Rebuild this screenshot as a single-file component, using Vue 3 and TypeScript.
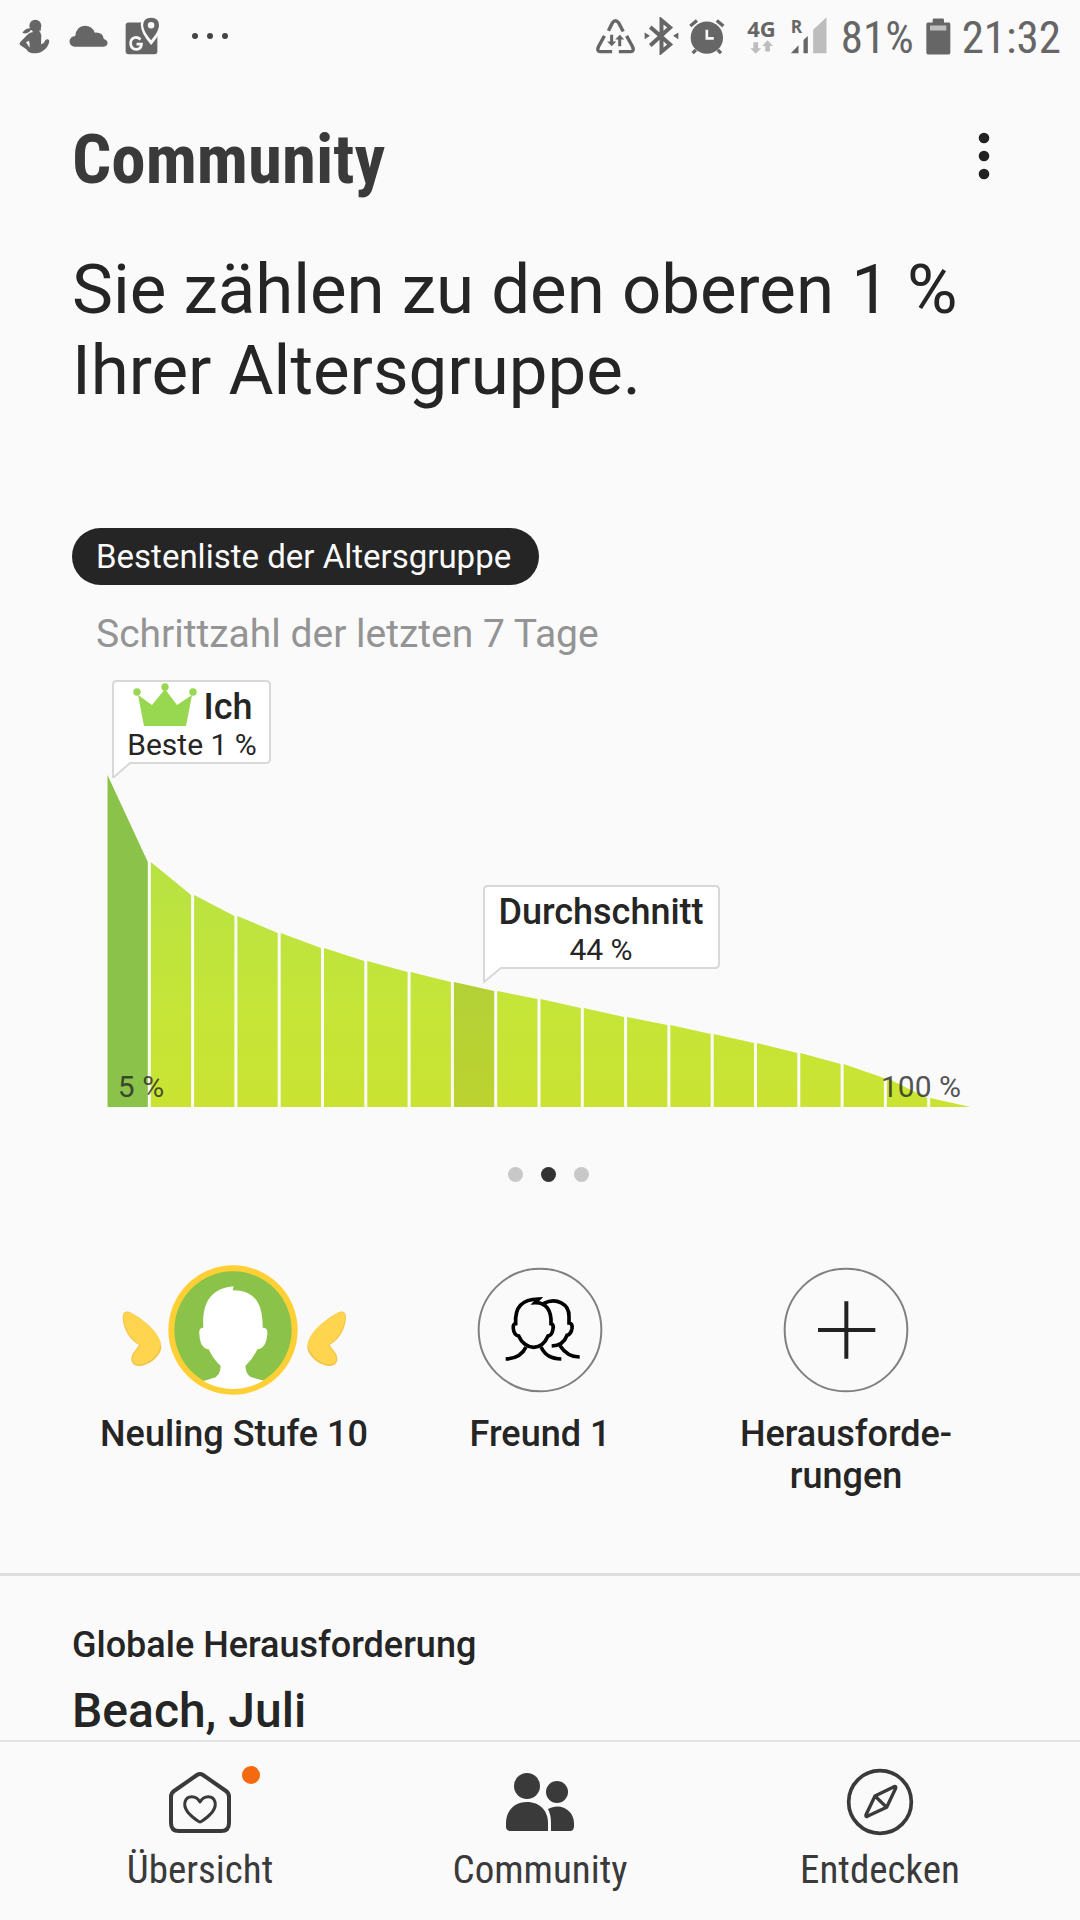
<script setup lang="ts">
interface Bar {
  points: string
  fill: string
}

const chartLeft = 34
const chartBase = 432
const barStep = 43.3
const heights: number[] = [
  332, 245, 212, 191, 174, 159, 146, 135, 125, 116, 108, 99, 90, 82, 73, 64, 54, 43, 29, 9, 0,
]
const meIndex = 0
const averageIndex = 8

function barFill(index: number): string {
  if (index === meIndex) return '#8bc34a'
  if (index === averageIndex) return 'url(#averageFill)'
  return 'url(#barFill)'
}

const bars: Bar[] = heights.slice(0, -1).map((height, i) => {
  const left = chartLeft + i * barStep + 1.5
  const right = chartLeft + (i + 1) * barStep - 1.5
  return {
    points: `${left},${chartBase} ${left},${chartBase - height} ${right},${chartBase - heights[i + 1]} ${right},${chartBase}`,
    fill: barFill(i),
  }
})

const slides: boolean[] = [false, true, false]
</script>

<template>
  <div class="page">
    <div class="status">
      <div class="status-left">
        <svg class="s-person" viewBox="57 56 93 105" width="31" height="35">
          <circle cx="106" cy="76" r="18" />
          <path d="M113 90L122 92L123 80Z" />
          <path d="M94 84Q78 82 67 97Q80 103 90 93Q90 88 96 88Z" />
          <path
            fill-rule="evenodd"
            d="M98 90L116 90Q122 96 124 104L123 132Q134 128 137 118Q144 114 148 121Q146 140 128 152Q118 160 98 159Q84 157 79 147L60 134Q57 130 61 125L82 103Q90 96 98 96ZM78 126L89 142Q90 132 87 121Z"
          />
        </svg>
        <svg class="s-cloud" viewBox="206 70 116 66" width="39" height="22">
          <path
            d="M222 135Q207 133 207 119Q208 105 224 103Q228 73 253 72Q275 72 283 93Q306 91 310 112Q322 115 321 126Q319 134 308 135Z"
          />
        </svg>
        <svg class="s-maps" viewBox="377 43 104 115" width="35" height="38">
          <rect x="378" y="60" width="96" height="96" rx="9" />
          <path class="cut" d="M455 128Q424 92 424 68Q424 34 455 34Q486 34 486 68Q486 92 455 128Z" />
          <path
            fill-rule="evenodd"
            d="M455 113Q431 86 431 68Q431 45 455 45Q479 45 479 68Q479 86 455 113ZM455 58A10 10 0 1 0 455 78A10 10 0 1 0 455 58Z"
          />
          <path class="cut-line" d="M423 111Q416 104 406 105Q392 109 393 124Q395 141 410 141Q425 140 426 125H411" />
        </svg>
        <svg class="s-dots" viewBox="0 0 38 8" width="38" height="8">
          <circle cx="4" cy="4" r="3" />
          <circle cx="19" cy="4" r="3" />
          <circle cx="34" cy="4" r="3" />
        </svg>
      </div>
      <div class="status-right">
        <svg class="s-recycle" viewBox="50 54 116 107" width="39" height="36">
          <g class="line" stroke-width="10">
            <path d="M87 92L99 68Q108 56 117 68L131 94" />
            <path d="M75 107L58 138Q51 153 62 154H98" />
            <path d="M141 107L158 138Q165 153 154 154H118" />
          </g>
          <path d="M92 104h9v20h9l-13 14l-14 -14h9ZM116 138h9v-20h9l-13 -14l-14 14h9Z" />
        </svg>
        <svg class="s-bluetooth" viewBox="198 50 104 115" width="35" height="38">
          <path class="line" stroke-width="12" d="M216 80L276 133L250 155V60L276 82L216 136" />
          <path d="M199 97L215 107L199 117ZM301 97L285 107L301 117Z" />
        </svg>
        <svg class="s-alarm" viewBox="333 52 109 111" width="36" height="37">
          <circle cx="387" cy="111" r="49" />
          <path class="line" stroke-width="10" d="M337 76L357 59M437 76L417 59M354 148L344 158M420 148L430 158" />
          <path class="cut-line" stroke-width="8" d="M387 87V113H408" />
        </svg>
        <div class="network">
          <span class="network-type">4G</span>
          <svg viewBox="516 119 68 40" width="23" height="14">
            <path
              class="pale"
              d="M526 125h14v18h9l-16 16l-16 -16h9ZM561 152h14v-16h9l-16 -17l-16 17h9Z"
            />
          </svg>
        </div>
        <svg class="s-signal" viewBox="635 26 110 162" width="37" height="54">
          <text x="637" y="97" class="roaming">R</text>
          <path d="M637 159L660 135V159ZM675 159V119L688 107V159Z" />
          <path class="pale" d="M704 159V88L744 51V159Z" />
        </svg>
        <span class="status-text">81%</span>
        <svg class="s-battery" viewBox="1037 53 75 110" width="25" height="37">
          <path d="M1057 66V58Q1057 54 1061 54H1087Q1091 54 1091 58V66H1106Q1110 66 1110 71V157Q1110 162 1105 162H1043Q1038 162 1038 157V71Q1038 66 1043 66Z" />
          <rect class="pale" x="1049" y="75" width="49" height="15" />
        </svg>
        <span class="status-text clock">21:32</span>
      </div>
    </div>

    <header class="header">
      <h1>Community</h1>
      <button class="more" type="button" aria-label="Weitere Optionen">
        <svg viewBox="0 0 12 48" width="12" height="48">
          <circle cx="6" cy="6" r="5.3" />
          <circle cx="6" cy="24" r="5.3" />
          <circle cx="6" cy="42" r="5.3" />
        </svg>
      </button>
    </header>

    <main>
      <section class="ranking">
        <p class="headline">Sie zählen zu den oberen 1&nbsp;% Ihrer Altersgruppe.</p>
        <h2 class="pill">Bestenliste der Altersgruppe</h2>
        <p class="period">Schrittzahl der letzten 7 Tage</p>

        <svg class="chart" viewBox="0 0 936 435" role="img" aria-label="Schrittzahl der Altersgruppe">
          <defs>
            <linearGradient id="barFill" gradientUnits="userSpaceOnUse" x1="0" y1="180" x2="0" y2="432">
              <stop offset="0" stop-color="#b7e243" />
              <stop offset="0.6" stop-color="#c5e538" />
              <stop offset="1" stop-color="#cae332" />
            </linearGradient>
            <linearGradient id="averageFill" gradientUnits="userSpaceOnUse" x1="0" y1="305" x2="0" y2="432">
              <stop offset="0" stop-color="#b3d137" />
              <stop offset="1" stop-color="#bcd32f" />
            </linearGradient>
          </defs>
          <polygon v-for="(bar, i) in bars" :key="i" :points="bar.points" :fill="bar.fill" />
          <text class="axis" x="69" y="422">5 %</text>
          <text class="axis" x="849" y="422">100 %</text>

          <path
            class="bubble"
            d="M41 10Q41 6 45 6H194Q198 6 198 10V84Q198 88 194 88H58L42 102H41Z"
          />
          <g class="crown">
            <circle cx="65" cy="17" r="3.7" />
            <circle cx="93" cy="12" r="3.7" />
            <circle cx="121" cy="17" r="3.7" />
            <path d="M66 20L80 30L93 14L105 30L120 20L114 51H72Z" />
          </g>
          <text class="bubble-title" x="156" y="44">Ich</text>
          <text class="bubble-text" x="120" y="80">Beste 1 %</text>

          <path
            class="bubble"
            d="M412 215Q412 211 416 211H643Q647 211 647 215V289Q647 293 643 293H429L412 307Z"
          />
          <text class="bubble-title" x="529" y="249">Durchschnitt</text>
          <text class="bubble-text" x="529" y="285">44 %</text>
        </svg>

        <div class="dots">
          <span v-for="(active, i) in slides" :key="i" class="dot" :class="{ active }"></span>
        </div>
      </section>

      <section class="actions">
        <button class="action" type="button">
          <svg viewBox="88 70 690 402" width="230" height="134">
            <defs>
              <clipPath id="avatarClip"><circle cx="430" cy="271" r="177" /></clipPath>
            </defs>
            <circle cx="430" cy="271" r="194" fill="#ffd035" />
            <circle cx="430" cy="271" r="176" fill="#8bc34a" />
            <path
              clip-path="url(#avatarClip)"
              fill="#fff"
              d="M341 264C337 190 362 147 432 140L429 152C490 152 520 185 519 264Q535 263 533 282Q530 326 503 329Q490 358 467 379Q469 405 483 412L528 425L560 470H300L335 426L378 413Q392 402 393 379Q370 358 357 329Q331 326 329 282Q327 263 341 264Z"
            />
            <g id="wing">
              <path fill="#f3c24a" d="M99 232C99 216 111 212 124 219C160 238 214 280 215 322C214 350 176 380 146 379C125 378 120 359 130 341C136 330 145 324 148 315C120 302 99 265 99 232Z" />
              <path fill="#ffd54f" d="M101 228C103 217 113 215 124 221C160 240 212 280 213 316C210 345 176 374 148 374C127 373 124 357 133 342C139 331 149 326 152 315C122 300 102 262 101 228Z" />
            </g>
            <use href="#wing" transform="translate(868 0) scale(-1 1)" />
          </svg>
          <span class="action-label">Neuling Stufe 10</span>
        </button>
        <button class="action" type="button">
          <svg viewBox="97 72 402 402" width="134" height="134">
            <circle class="ring" cx="298" cy="273" r="184" />
            <g class="friends">
              <path d="M225 254C222 205 243 181 294 180L283 191C317 190 333 215 331 254Q340 256 337 270Q334 290 322 291C312 314 296 325 279 325C261 325 243 312 234 291Q220 289 218 269Q216 255 225 254Z" />
              <path d="M256 324C245 348 222 359 195 360M301 324C314 350 332 359 362 360" />
              <path d="M309 193C347 175 386 194 385 232V252Q396 253 394 268Q391 286 379 289C372 309 356 320 333 321" />
              <path d="M358 320C373 343 391 354 417 354" />
            </g>
          </svg>
          <span class="action-label">Freund 1</span>
        </button>
        <button class="action" type="button">
          <svg viewBox="175 66 402 402" width="134" height="134">
            <circle class="ring" cx="376" cy="267" r="184" />
            <path d="M377 181V353M292 267H464" stroke="#222" stroke-width="12" />
          </svg>
          <span class="action-label">Herausforde-<br />rungen</span>
        </button>
      </section>

      <section class="challenge">
        <h2>Globale Herausforderung</h2>
        <p>Beach, Juli</p>
      </section>
    </main>

    <nav class="tabs">
      <a class="tab" href="#uebersicht">
        <span class="tab-icon">
          <svg viewBox="-3 -4 68 68" width="68" height="68">
            <path class="tab-line" stroke-width="4" d="M28 3Q31 1 34 3L57 19Q60 21 60 25V51Q60 59 52 59H10Q2 59 2 51V25Q2 21 5 19Z" />
            <path class="tab-line" stroke-width="3" d="M31 30C27 23 18 23 16 30C14 38 23 45 29 49Q31 51 33 49C39 45 48 38 46 30C44 23 35 23 31 30Z" />
          </svg>
          <span class="badge"></span>
        </span>
        <span>Übersicht</span>
      </a>
      <a class="tab" href="#community" aria-current="page">
        <span class="tab-icon">
          <svg viewBox="0 -4 68 68" width="68" height="68" fill="#3a3a3a">
            <circle cx="21" cy="14" r="13" />
            <circle cx="51" cy="20" r="11" />
            <path d="M0 51C0 39 8 30 21 30S42 39 42 51V59H5Q0 59 0 55Z" />
            <path d="M42 37C54 30 68 38 68 51V54Q68 59 64 59H45V51Q45 43 42 37Z" />
          </svg>
        </span>
        <span>Community</span>
      </a>
      <a class="tab" href="#entdecken">
        <span class="tab-icon">
          <svg viewBox="258 84 204 204" width="68" height="68">
            <circle class="tab-line" stroke-width="11" cx="360" cy="186" r="94" />
            <path class="tab-line" stroke-width="10" d="M345 168L402 140Q409 138 407 145L380 202L322 229Q316 231 318 224ZL380 202" />
          </svg>
        </span>
        <span>Entdecken</span>
      </a>
    </nav>
  </div>
</template>

<style>
body {
  background: #fafafa;
}
</style>

<style scoped>
.page {
  min-height: 100vh;
  display: flex;
  flex-direction: column;
  background: #fafafa;
  color: #252525;
  font-family: Roboto, 'Noto Sans', sans-serif;
}

svg {
  display: block;
  flex: none;
}

h1,
h2,
p {
  margin: 0;
}

button {
  padding: 0;
  border: 0;
  background: none;
  color: inherit;
  font: inherit;
}

.status {
  height: 72px;
  display: flex;
  justify-content: space-between;
  padding: 0 19px;
  fill: #666;
}

.status-left,
.status-right {
  display: flex;
  align-items: center;
}

.s-cloud {
  margin-left: 19px;
}

.s-maps {
  margin-left: 17px;
}

.s-dots {
  margin-left: 31px;
  fill: #444;
}

.cut {
  fill: #fafafa;
}

.cut-line {
  fill: none;
  stroke: #fafafa;
  stroke-width: 8px;
}

.line {
  fill: none;
  stroke: #666;
}

.pale {
  fill: #bdbdbd;
}

.s-bluetooth {
  margin-left: 9px;
}

.s-alarm {
  margin-left: 10px;
}

.network {
  display: flex;
  flex-direction: column;
  align-items: center;
  gap: 2px;
  margin-left: 22px;
  color: #666;
}

.network-type {
  font: 700 22px/20px 'Open Sans', sans-serif;
}

.s-signal {
  margin-left: 14px;
}

.roaming {
  font: 700 52px 'Open Sans', sans-serif;
}

.status-text {
  margin-left: 14px;
  padding-top: 4px;
  color: #666;
  font-family: 'Roboto Condensed', Roboto, sans-serif;
  font-size: 45px;
  line-height: 60px;
}

.s-battery {
  margin-left: 12px;
}

.clock {
  margin-left: 11px;
}

.header {
  display: flex;
  align-items: center;
  justify-content: space-between;
  padding: 48px 72px 0;
}

.header h1 {
  color: #3a3a3a;
  font-family: 'Roboto Condensed', Roboto, sans-serif;
  font-size: 69px;
  font-weight: 700;
  line-height: 80px;
}

.more {
  width: 48px;
  display: flex;
  justify-content: center;
  padding-bottom: 8px;
  fill: #222;
}

.ranking {
  padding: 49px 72px 0;
}

.headline {
  font-size: 69px;
  line-height: 81px;
}

.pill {
  width: fit-content;
  margin-top: 117px;
  padding: 0 28px 0 24px;
  border-radius: 29px;
  background: #252525;
  color: #fafafa;
  font-size: 33px;
  font-weight: 400;
  line-height: 57px;
}

.period {
  margin-top: 25px;
  padding-left: 24px;
  color: #949494;
  font-size: 39px;
  line-height: 48px;
}

.chart {
  width: 100%;
  height: auto;
  margin-top: 17px;
}

.chart text {
  text-anchor: middle;
  fill: #252525;
}

.chart .axis {
  fill: #252525;
  fill-opacity: 0.8;
  font-size: 30px;
}

.bubble {
  fill: #fff;
  stroke: #d8d8d8;
  stroke-width: 2px;
}

.crown {
  fill: #98d851;
}

.bubble-title {
  font-size: 36px;
  font-weight: 500;
}

.bubble-text {
  font-size: 30px;
}

.dots {
  display: flex;
  justify-content: center;
  gap: 18px;
  margin-top: 57px;
  padding-left: 16px;
}

.dot {
  width: 15px;
  height: 15px;
  border-radius: 50%;
  background: #c8c8c8;
}

.dot.active {
  background: #333;
}

.actions {
  display: grid;
  grid-template-columns: repeat(3, 1fr);
  padding: 81px 81px 76px;
  border-bottom: 3px solid #dedede;
}

.action {
  display: flex;
  flex-direction: column;
  align-items: center;
}

.action-label {
  margin-top: 16px;
  font-size: 36px;
  font-weight: 500;
  line-height: 42px;
}

.ring {
  fill: none;
  stroke: #808080;
  stroke-width: 6px;
}

.friends {
  fill: none;
  stroke: #000;
  stroke-width: 11px;
}

.challenge {
  padding: 45px 72px 0;
}

.challenge h2 {
  font-size: 36px;
  font-weight: 500;
  line-height: 48px;
}

.challenge p {
  margin-top: 14px;
  font-size: 48px;
  font-weight: 500;
  line-height: 56px;
}

.tabs {
  position: sticky;
  bottom: 0;
  display: grid;
  grid-template-columns: repeat(3, 1fr);
  margin-top: auto;
  padding: 26px 30px 27px;
  border-top: 2px solid #e4e4e4;
  background: #fafafa;
}

.tab {
  display: flex;
  flex-direction: column;
  align-items: center;
  gap: 11px;
  color: #3a3a3a;
  font-family: 'Roboto Condensed', Roboto, sans-serif;
  font-size: 39px;
  line-height: 46px;
  text-decoration: none;
}

.tab-icon {
  position: relative;
}

.tab-line {
  fill: none;
  stroke: #3a3a3a;
  stroke-linejoin: round;
}

.badge {
  position: absolute;
  top: -2px;
  right: -26px;
  width: 18px;
  height: 18px;
  border-radius: 50%;
  background: #f56a0e;
}
</style>
